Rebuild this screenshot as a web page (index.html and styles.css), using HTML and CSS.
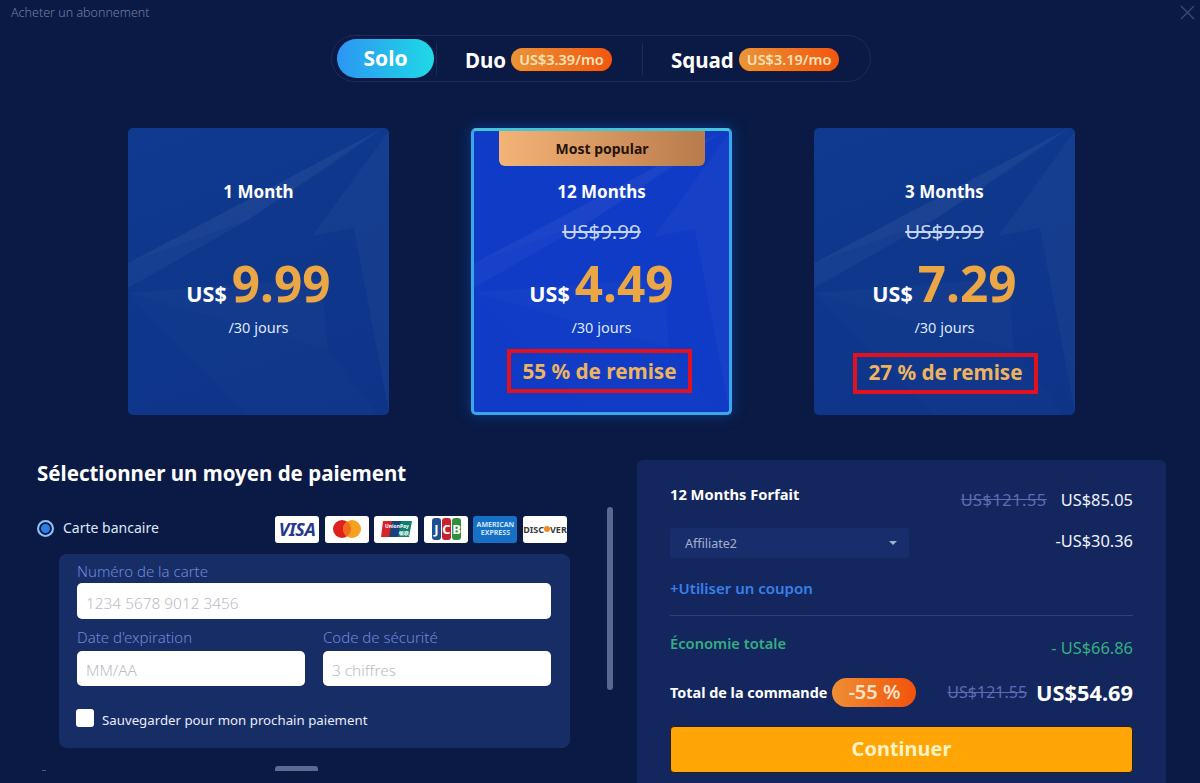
FILE: index.html
```html
<!DOCTYPE html>
<html lang="fr">
  <head>
    <meta charset="UTF-8" />
    <meta name="viewport" content="width=device-width, initial-scale=1.0" />
    <title>Acheter un abonnement</title>
    <link rel="stylesheet" href="styles.css">
  </head>
  <body>
    <header class="topbar">
      <span class="window-title">Acheter un abonnement</span>
      <svg class="close" width="15" height="15" viewBox="0 0 15 15"><path d="M1 1l13 13M14 1L1 14" stroke="#3d4b72" stroke-width="1.2" fill="none"/></svg>
    </header>

    <nav class="tabs">
      <span class="tab-solo">Solo</span>
      <span class="tab tab-duo">Duo <span class="badge">US$3.39/mo</span></span>
      <span class="tab tab-squad">Squad <span class="badge">US$3.19/mo</span></span>
    </nav>

    <section class="plans">
      <div class="plan">
        <svg class="plan-bg" viewBox="0 0 261 287" preserveAspectRatio="none"><use href="#plane"/></svg>
        <div class="plan-name">1 Month</div>
        <div class="plan-old"></div>
        <div class="plan-price"><span class="cur">US$</span><span class="amount">9.99</span></div>
        <div class="plan-per">/30 jours</div>
      </div>
      <div class="plan plan-hot">
        <svg class="plan-bg" viewBox="0 0 261 287" preserveAspectRatio="none"><use href="#plane"/></svg>
        <div class="ribbon">Most popular</div>
        <div class="plan-name">12 Months</div>
        <div class="plan-old">US$9.99</div>
        <div class="plan-price"><span class="cur">US$</span><span class="amount">4.49</span></div>
        <div class="plan-per">/30 jours</div>
        <div class="plan-off">55 % de remise</div>
      </div>
      <div class="plan">
        <svg class="plan-bg" viewBox="0 0 261 287" preserveAspectRatio="none"><use href="#plane"/></svg>
        <div class="plan-name">3 Months</div>
        <div class="plan-old">US$9.99</div>
        <div class="plan-price"><span class="cur">US$</span><span class="amount">7.29</span></div>
        <div class="plan-per">/30 jours</div>
        <div class="plan-off plan-off-low">27 % de remise</div>
      </div>
    </section>

    <svg width="0" height="0" class="defs">
      <defs>
        <g id="plane" fill="#fff">
          <polygon points="255,0 0,135 0,160 120,92" opacity="0.035"/>
          <polygon points="0,135 120,92 200,40 255,0" opacity="0.02"/>
          <polygon points="261,3 184,108 226,100 261,285" opacity="0.03"/>
          <polygon points="0,165 200,222 194,150" opacity="0.025"/>
          <polygon points="0,165 200,222 250,287 120,287" opacity="0.012"/>
        </g>
      </defs>
    </svg>

    <main class="lower">
      <div class="pay">
        <div class="pay-main">
          <h2>Sélectionner un moyen de paiement</h2>
          <div class="method">
            <span class="radio"></span>
            <span class="method-name">Carte bancaire</span>
            <div class="logos">
              <span class="logo visa">VISA</span>
              <span class="logo">
                <svg width="30" height="20" viewBox="0 0 30 20"><circle cx="10" cy="10" r="9" fill="#e0201c"/><circle cx="20" cy="10" r="9" fill="#f5a01e"/><path d="M15 2.5a9 9 0 0 1 0 15a9 9 0 0 1 0-15z" fill="#f26a1b"/></svg>
              </span>
              <span class="logo">
                <svg width="33" height="18" viewBox="0 0 33 18"><path d="M3 1h12l-3 16H1z" fill="#d8232a"/><path d="M12 1h11l-3 16H9z" fill="#1a3f7a"/><path d="M21 1h11l-3 16H18z" fill="#0f7f6f"/><text x="17" y="8" class="up-text" text-anchor="middle">UnionPay</text><text x="24" y="15" class="up-text" text-anchor="middle">银联</text></svg>
              </span>
              <span class="logo">
                <svg width="32" height="24" viewBox="0 0 32 24"><rect x="2" y="1" width="9" height="22" rx="3" fill="#1d4f91"/><rect x="12" y="1" width="9" height="22" rx="3" fill="#c8202f"/><rect x="22" y="1" width="9" height="22" rx="3" fill="#2f8f3e"/><text x="6.5" y="17" class="jcb-text" text-anchor="middle">J</text><text x="16.5" y="17" class="jcb-text" text-anchor="middle">C</text><text x="26.5" y="17" class="jcb-text" text-anchor="middle">B</text></svg>
              </span>
              <span class="logo amex"><span>AMERICAN<br>EXPRESS</span></span>
              <span class="logo discover">DISC<i class="dot"></i>VER</span>
            </div>
          </div>
          <form class="card-form">
            <label class="field-label">Numéro de la carte</label>
            <input type="text" class="field" placeholder="1234 5678 9012 3456" />
            <div class="field-row">
              <div class="field-col">
                <label class="field-label">Date d'expiration</label>
                <input type="text" class="field" placeholder="MM/AA" />
              </div>
              <div class="field-col">
                <label class="field-label">Code de sécurité</label>
                <input type="text" class="field" placeholder="3 chiffres" />
              </div>
            </div>
            <div class="save"><span class="check"></span><span class="save-text">Sauvegarder pour mon prochain paiement</span></div>
          </form>
          <div class="next-method"><span class="next-mark"></span><span class="next-logo"></span></div>
        </div>
        <div class="scrollbar"></div>
      </div>

      <aside class="summary">
        <div class="row row-plan">
          <span class="strong">12 Months Forfait</span>
          <span class="prices"><s class="was">US$121.55</s><span class="val">US$85.05</span></span>
        </div>
        <div class="row row-select">
          <div class="select">Affiliate2<span class="caret"></span></div>
          <span class="val">-US$30.36</span>
        </div>
        <a class="coupon">+Utiliser un coupon</a>
        <div class="rule"></div>
        <div class="row row-save">
          <span class="save-label">Économie totale</span>
          <span class="save-val">- US$66.86</span>
        </div>
        <div class="row row-total">
          <span class="total-left"><span class="strong">Total de la commande</span><span class="off-pill">-55 %</span></span>
          <span class="prices"><s class="was was-total">US$121.55</s><span class="grand">US$54.69</span></span>
        </div>
        <button class="continue" type="button">Continuer</button>
      </aside>
    </main>
  </body>
</html>
```

FILE: styles.css
```css
* {
  box-sizing: border-box;
}

html, body {
  height: 783px;
}

body {
  margin: 0;
  overflow: hidden;
  background-color: #0a1a45;
  color: #fff;
  font-family: "Noto Sans", "Open Sans", sans-serif;
}

.topbar {
  display: flex;
  justify-content: space-between;
  align-items: center;
  height: 24px;
  padding: 0 5px 0 11px;
}

.window-title {
  font-size: 12.5px;
  font-weight: 300;
  color: #6f7ea6;
}

.close {
  margin-top: 1px;
}

.defs {
  position: absolute;
}

/* tabs */
.tabs {
  display: flex;
  align-items: center;
  width: 540px;
  height: 47px;
  margin: 11px 0 0 331px;
  padding-left: 5px;
  border: 1px solid #1b2b5e;
  border-radius: 24px;
}

.tab-solo {
  width: 97px;
  height: 39px;
  line-height: 38px;
  text-align: center;
  font-size: 21px;
  font-weight: 700;
  border-radius: 20px;
  background: linear-gradient(90deg, #2c96f2, #1fd9e6);
}

.tab {
  display: flex;
  align-items: center;
  gap: 5px;
  height: 32px;
  padding-top: 2px;
  font-size: 20.5px;
  font-weight: 700;
  border-left: 1px solid #1b2b5e;
}

.tab-duo {
  width: 206px;
  margin-left: 2px;
  padding-left: 28px;
}

.tab-squad {
  padding-left: 28px;
}

.badge {
  height: 23px;
  line-height: 22px;
  padding: 0 8px;
  font-size: 14.5px;
  font-weight: 600;
  color: #fde2b8;
  border-radius: 12px;
  background: linear-gradient(90deg, #eb9436, #f2560f);
  box-shadow: 0 1px 1px #3a1606;
}

/* plans */
.plans {
  display: flex;
  gap: 82px;
  margin: 46px 0 0 128px;
}

.plan {
  position: relative;
  width: 261px;
  height: 287px;
  padding-top: 53px;
  text-align: center;
  border-radius: 5px;
  background: linear-gradient(160deg, #0f3a8f, #0e3488);
}

.plan-hot {
  padding-top: 50px;
  background: #0f3bc6;
  border: 3px solid #3aa6ec;
  border-top-color: #45c4d8;
  box-shadow: 0 0 14px #0c3d86;
}

.plan-bg {
  position: absolute;
  top: 0;
  left: 0;
  width: 100%;
  height: 100%;
}

.ribbon {
  position: absolute;
  top: 0;
  left: 25px;
  width: 206px;
  height: 35px;
  line-height: 35px;
  font-size: 14px;
  font-weight: 700;
  color: #26130a;
  border-radius: 0 0 6px 6px;
  background: linear-gradient(90deg, #f4b477, #b97a4c);
}

.plan-name {
  position: relative;
  height: 22px;
  line-height: 22px;
  font-size: 17px;
  font-weight: 700;
}

.plan-old {
  position: relative;
  height: 26px;
  margin-top: 15px;
  line-height: 26px;
  font-size: 20.5px;
  color: #c5d4f2;
  text-decoration: line-through;
}

.plan-price {
  position: relative;
  display: flex;
  justify-content: center;
  align-items: baseline;
  gap: 5px;
  height: 62px;
  margin-top: 8px;
  line-height: 62px;
}

.cur {
  font-size: 21.5px;
  font-weight: 700;
}

.amount {
  font-size: 49.5px;
  font-weight: 700;
  color: #eba645;
}

.plan-per {
  position: relative;
  margin-top: 3px;
  line-height: 20px;
  font-size: 14.5px;
  color: #dfe7f8;
}

.plan-off {
  position: relative;
  width: 185px;
  height: 44px;
  margin: 12px 0 0 33px;
  line-height: 36px;
  font-size: 20.7px;
  font-weight: 700;
  color: #eeb35e;
  border: 4px solid #e3101f;
}

.plan-off-low {
  height: 41px;
  margin: 16px 0 0 39px;
  line-height: 31px;
}

/* lower part */
.lower {
  display: flex;
  margin-top: 45px;
}

.pay {
  display: flex;
  width: 637px;
}

.pay-main {
  width: 570px;
  padding-left: 37px;
}

h2 {
  margin: 0;
  line-height: 26px;
  font-size: 20.5px;
  font-weight: 700;
}

.method {
  display: flex;
  align-items: center;
  height: 28px;
  margin-top: 29px;
}

.radio {
  width: 17px;
  height: 17px;
  margin-top: -2px;
  border-radius: 50%;
  border: 2px solid #8fc0f5;
  background: #2b7fe6;
  box-shadow: inset 0 0 0 2px #0a1a45;
}

.method-name {
  margin: -4px 0 0 9px;
  font-size: 14px;
  color: #dfe7f8;
}

.logos {
  display: flex;
  gap: 5.6px;
  margin-left: auto;
  margin-right: 3px;
}

.logo {
  display: flex;
  align-items: center;
  justify-content: center;
  width: 44px;
  height: 27px;
  border-radius: 3px;
  background: #fff;
}

.visa {
  font-size: 18px;
  font-weight: 700;
  font-style: italic;
  letter-spacing: -0.5px;
  color: #27378c;
}

.up-text {
  font-size: 5px;
  font-weight: 700;
  fill: #fff;
}

.jcb-text {
  font-size: 13px;
  font-weight: 700;
  fill: #fff;
}

.amex {
  background: #1670c6;
  color: #cfe3f6;
  font-size: 7px;
  font-weight: 700;
  line-height: 8px;
  text-align: center;
}

.discover {
  font-size: 9px;
  font-weight: 700;
  color: #3a3a3a;
}

.dot {
  width: 6px;
  height: 6px;
  border-radius: 50%;
  background: #f08a1d;
}

.card-form {
  width: 511px;
  height: 194px;
  margin: 11px 0 0 22px;
  padding: 6px 19px 0 18px;
  border-radius: 8px;
  background: #172d66;
}

.field-label {
  display: block;
  height: 23px;
  line-height: 22px;
  font-size: 15px;
  font-weight: 300;
  color: #6f88d8;
}

.field {
  display: block;
  width: 100%;
  height: 36px;
  padding: 4px 9px 0;
  border: 0;
  border-radius: 5px;
  background: #fff;
  font-family: inherit;
  font-size: 15.4px;
  font-weight: 300;
}

.field::placeholder {
  color: #b9bcc4;
}

.field-row {
  display: flex;
  gap: 18px;
  margin-top: 7px;
}

.field-col {
  flex: 1;
}

.field-col .field {
  height: 35px;
}

.field-col .field-label {
  height: 25px;
}

.save {
  display: flex;
  align-items: center;
  height: 18px;
  margin-top: 23px;
  font-size: 13.25px;
  color: #e6ecfa;
}

.save-text {
  padding-top: 4px;
}

.check {
  width: 18px;
  height: 18px;
  margin: 0 8px 0 -1px;
  border-radius: 3px;
  background: #fff;
}

.next-method {
  display: flex;
  margin-top: 18px;
  padding-left: 5px;
}

.next-mark {
  width: 4px;
  height: 1px;
  margin-top: 4px;
  background: #4a5a80;
}

.next-logo {
  width: 43px;
  height: 5px;
  margin-left: 229px;
  border-radius: 3px 3px 0 0;
  background: #5a6b90;
}

.scrollbar {
  width: 6px;
  height: 183px;
  margin: 47px 0 0 37px;
  border-radius: 3px;
  background: #58698f;
}

/* summary */
.summary {
  width: 529px;
  height: 360px;
  padding: 0 33px;
  border-radius: 6px;
  background: #13275e;
}

.row {
  display: flex;
  justify-content: space-between;
}

.strong {
  font-size: 14.7px;
  font-weight: 700;
}

.prices {
  display: flex;
  align-items: center;
  gap: 14px;
}

.was {
  font-size: 16.4px;
  letter-spacing: 0.5px;
  color: #5b6cb4;
}

.val {
  font-size: 16.4px;
  color: #eef2fb;
}

.row-plan {
  height: 24px;
  margin-top: 28px;
  line-height: 12px;
}

.row-select {
  height: 30px;
  margin-top: 16px;
}

.select {
  position: relative;
  width: 239px;
  height: 30px;
  padding-left: 15px;
  line-height: 31px;
  font-size: 12.5px;
  color: #a3b0cf;
  border-radius: 3px;
  background: #182e6c;
}

.caret {
  position: absolute;
  top: 13px;
  right: 12px;
  border: 4px solid transparent;
  border-top-color: #a3b0cf;
}

.row-select .val {
  line-height: 26px;
}

.coupon {
  display: block;
  margin-top: 20px;
  line-height: 20px;
  font-size: 15px;
  font-weight: 600;
  color: #3a80ea;
}

.rule {
  height: 1px;
  margin-top: 17px;
  background: #2c4079;
}

.row-save {
  height: 30px;
  margin-top: 17px;
}

.save-label {
  font-size: 14.7px;
  font-weight: 600;
  line-height: 20px;
  color: #36ad82;
}

.save-val {
  font-size: 16.4px;
  line-height: 30px;
  color: #36ad82;
}

.row-total {
  align-items: center;
  height: 30px;
  margin-top: 14px;
}

.total-left {
  display: flex;
  align-items: center;
  gap: 5px;
}

.total-left .strong {
  font-size: 14.4px;
}

.off-pill {
  width: 84px;
  height: 29px;
  line-height: 28px;
  text-align: center;
  font-size: 20px;
  font-weight: 600;
  color: #fde2c8;
  border-radius: 15px;
  background: linear-gradient(90deg, #ee8f33, #f2520c);
}

.row-total .prices {
  gap: 9px;
}

.was-total {
  font-size: 16px;
  letter-spacing: 0;
}

.grand {
  font-size: 21.8px;
  font-weight: 700;
}

.continue {
  display: block;
  width: 100%;
  height: 47px;
  margin-top: 19px;
  padding-bottom: 3px;
  border: 1px solid #2b1d10;
  border-radius: 4px;
  background: #ffa505;
  color: #fff3c4;
  font-family: inherit;
  font-size: 20px;
  font-weight: 700;
}
```
